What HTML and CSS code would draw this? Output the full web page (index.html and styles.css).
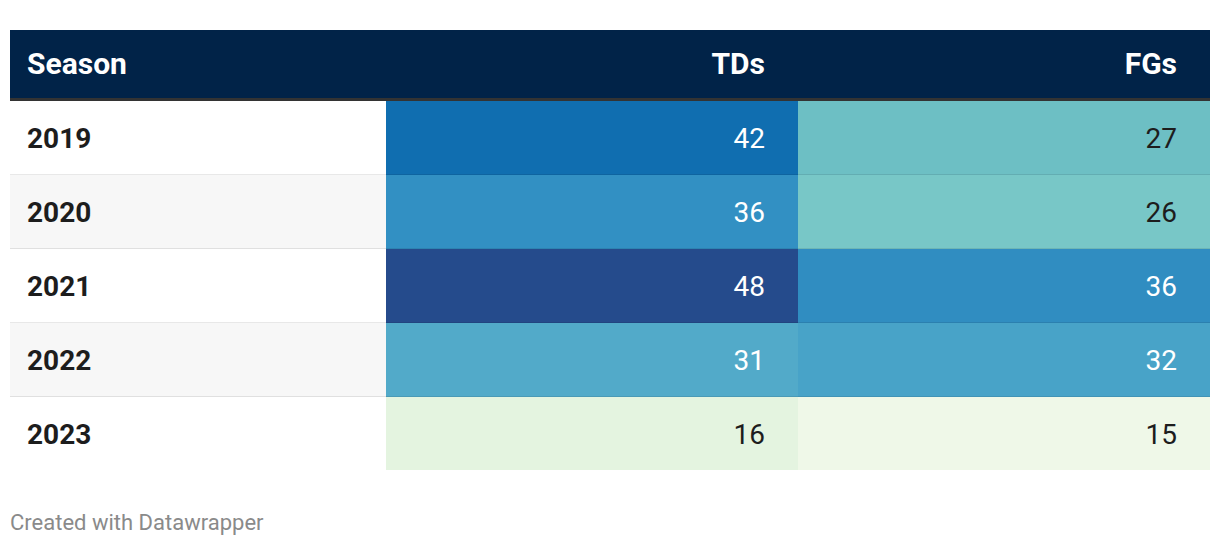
FILE: index.html
```html
<!DOCTYPE html>
<html lang="en">
<head>
<meta charset="utf-8">
<title>Season TDs FGs</title>
<link rel="stylesheet" href="styles.css">
</head>
<body>
<div class="chart">
  <table class="tbl">
    <thead>
      <tr>
        <th class="c-season">Season</th>
        <th class="c-num">TDs</th>
        <th class="c-num">FGs</th>
      </tr>
    </thead>
    <tbody>
      <tr>
        <td class="c-season">2019</td>
        <td class="c-num v-42 light">42</td>
        <td class="c-num v-27">27</td>
      </tr>
      <tr class="alt">
        <td class="c-season">2020</td>
        <td class="c-num v-36a light">36</td>
        <td class="c-num v-26">26</td>
      </tr>
      <tr>
        <td class="c-season">2021</td>
        <td class="c-num v-48 light">48</td>
        <td class="c-num v-36b light">36</td>
      </tr>
      <tr class="alt">
        <td class="c-season">2022</td>
        <td class="c-num v-31 light">31</td>
        <td class="c-num v-32 light">32</td>
      </tr>
      <tr class="last">
        <td class="c-season">2023</td>
        <td class="c-num v-16">16</td>
        <td class="c-num v-15">15</td>
      </tr>
    </tbody>
  </table>
  <div class="footer">Created with Datawrapper</div>
</div>
</body>
</html>
```

FILE: styles.css
```css
html, body {
  margin: 0;
  padding: 0;
  background: #ffffff;
}

body {
  font-family: Roboto, "Liberation Sans", Arial, sans-serif;
  color: #1d1d1d;
}

.chart {
  padding: 30px 10px 0 10px;
}

.tbl {
  width: 1200px;
  border-collapse: separate;
  border-spacing: 0;
  table-layout: fixed;
}

.tbl th,
.tbl td {
  font-size: 28px;
  line-height: 32px;
  padding: 0;
  vertical-align: middle;
}

.tbl th {
  background: #012348;
  color: #ffffff;
  font-size: 30px;
  line-height: 34px;
  font-weight: 700;
  height: 68px;
  border-bottom: 3px solid #333333;
}

.c-season {
  width: 359px;
  text-align: left;
  padding-left: 17px !important;
}

.c-num {
  width: 379px;
  text-align: right;
  padding-right: 33px !important;
}

.tbl td {
  height: 71px;
  padding-top: 2px;
  border-bottom: 1px solid rgba(0, 0, 0, 0.09);
  background: #ffffff;
  color: #1d1d1d;
}

.tbl td.c-season {
  font-weight: 700;
}

.tbl tr.alt td.c-season {
  background: #f7f7f7;
}

.tbl tr.last td {
  border-bottom: 0;
}

.tbl td.light {
  color: #ffffff;
}

.tbl td.v-42 { background: #106eb0; }
.tbl td.v-27 { background: #6dbfc4; }
.tbl td.v-36a { background: #3290c3; }
.tbl td.v-26 { background: #78c7c7; }
.tbl td.v-48 { background: #254b8c; }
.tbl td.v-36b { background: #308dc1; }
.tbl td.v-31 { background: #52aac9; }
.tbl td.v-32 { background: #48a3c8; }
.tbl td.v-16 { background: #e4f4e0; }
.tbl td.v-15 { background: #eff8e8; }

.footer {
  margin-top: 40px;
  font-size: 22px;
  line-height: 26px;
  color: #8a8a8a;
}
```
